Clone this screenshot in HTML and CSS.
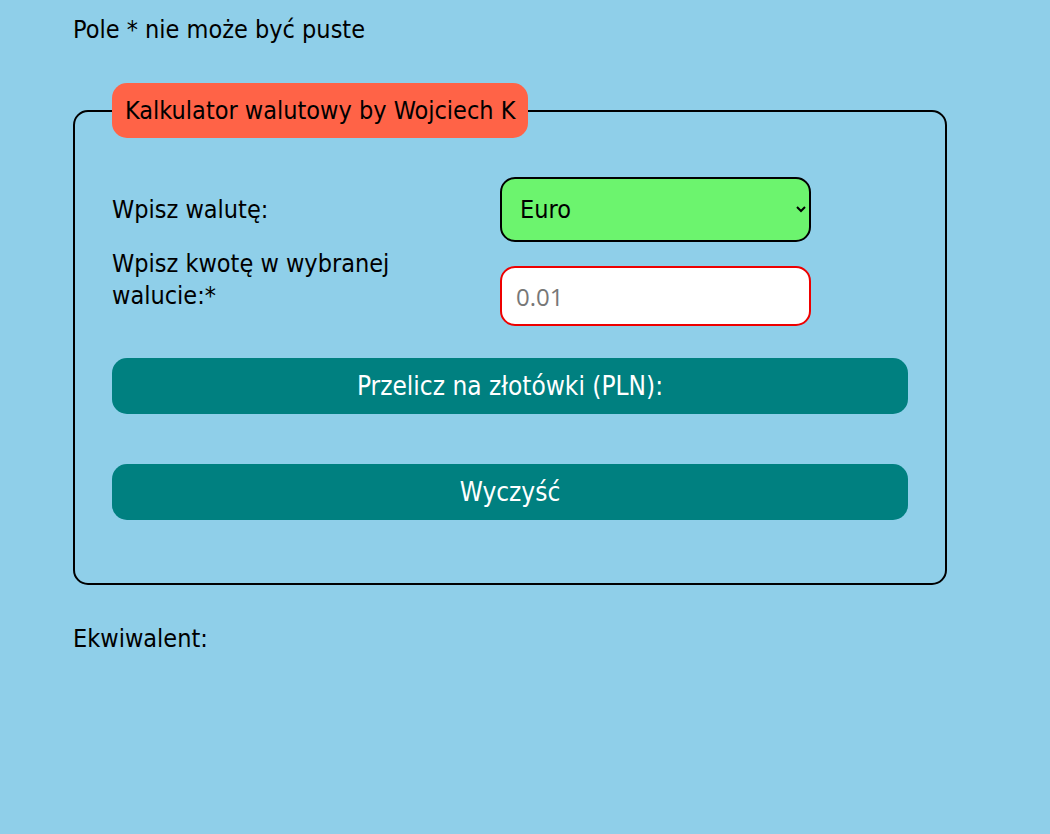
FILE: index.html
```html
<!DOCTYPE html>
<html lang="pl">
<head>
<meta charset="utf-8">
<title>Kalkulator walutowy</title>
<link rel="stylesheet" href="styles.css">
</head>
<body>
<div class="page">
  <p class="note">Pole * nie może być puste</p>
  <fieldset class="calc">
    <legend class="legend">Kalkulator walutowy by Wojciech K</legend>
    <div class="row">
      <label class="label" for="cur">Wpisz walutę:</label>
      <select id="cur" class="select">
        <option>Euro</option>
      </select>
    </div>
    <div class="row row-amount">
      <label class="label label-raised" for="amt">Wpisz kwotę w wybranej walucie:*</label>
      <input id="amt" class="input" type="text" placeholder="0.01">
    </div>
    <button class="btn btn-first" type="button">Przelicz na złotówki (PLN):</button>
    <button class="btn btn-second" type="button">Wyczyść</button>
  </fieldset>
  <p class="result">Ekwiwalent:</p>
</div>
</body>
</html>
```
FILE: styles.css
```css
html, body {
  margin: 0;
  padding: 0;
  background: #8fcfe9;
}
body {
  font-family: "DejaVu Sans Condensed", "Liberation Sans", sans-serif;
  font-stretch: condensed;
  font-size: 25px;
  color: #000;
}
.page {
  width: 874px;
  margin-left: 73px;
  padding-top: 14px;
}
.note {
  margin: 0;
  line-height: 32px;
}
.calc {
  margin: 37px 0 0 0;
  border: 2px solid #000;
  border-radius: 15px;
  padding: 39px 37px 63px 37px;
  box-sizing: border-box;
  width: 874px;
}
.legend {
  background: #ff6347;
  border-radius: 15px;
  padding: 12px 13px;
  line-height: 31px;
}
.row {
  display: flex;
  align-items: center;
  margin-bottom: 24px;
}
.row-amount {
  margin-bottom: 32px;
}
.label {
  width: 388px;
  padding-right: 90px;
  box-sizing: border-box;
  line-height: 32px;
}
.label-raised {
  margin-top: -32px;
}
.select {
  width: 311px;
  height: 65px;
  background: #6cf46e;
  border: 2px solid #000;
  border-radius: 15px;
  font-family: inherit;
  font-stretch: condensed;
  font-size: 25px;
  padding: 0 10px 0 14px;
  color: #000;
}
.input {
  width: 311px;
  height: 60px;
  box-sizing: border-box;
  background: #fff;
  border: 2px solid #ee0000;
  border-radius: 15px;
  font-family: "Open Sans", "Liberation Sans", sans-serif;
  font-size: 24px;
  padding: 0 14px;
}
.input::placeholder {
  color: #777;
}
.btn {
  display: block;
  width: 100%;
  height: 56px;
  border: 0;
  border-radius: 15px;
  background: #008080;
  color: #fff;
  font-family: inherit;
  font-stretch: condensed;
  font-size: 26px;
}
.btn-second {
  margin-top: 50px;
}
.result {
  margin: 38px 0 0 0;
  line-height: 32px;
}
```
